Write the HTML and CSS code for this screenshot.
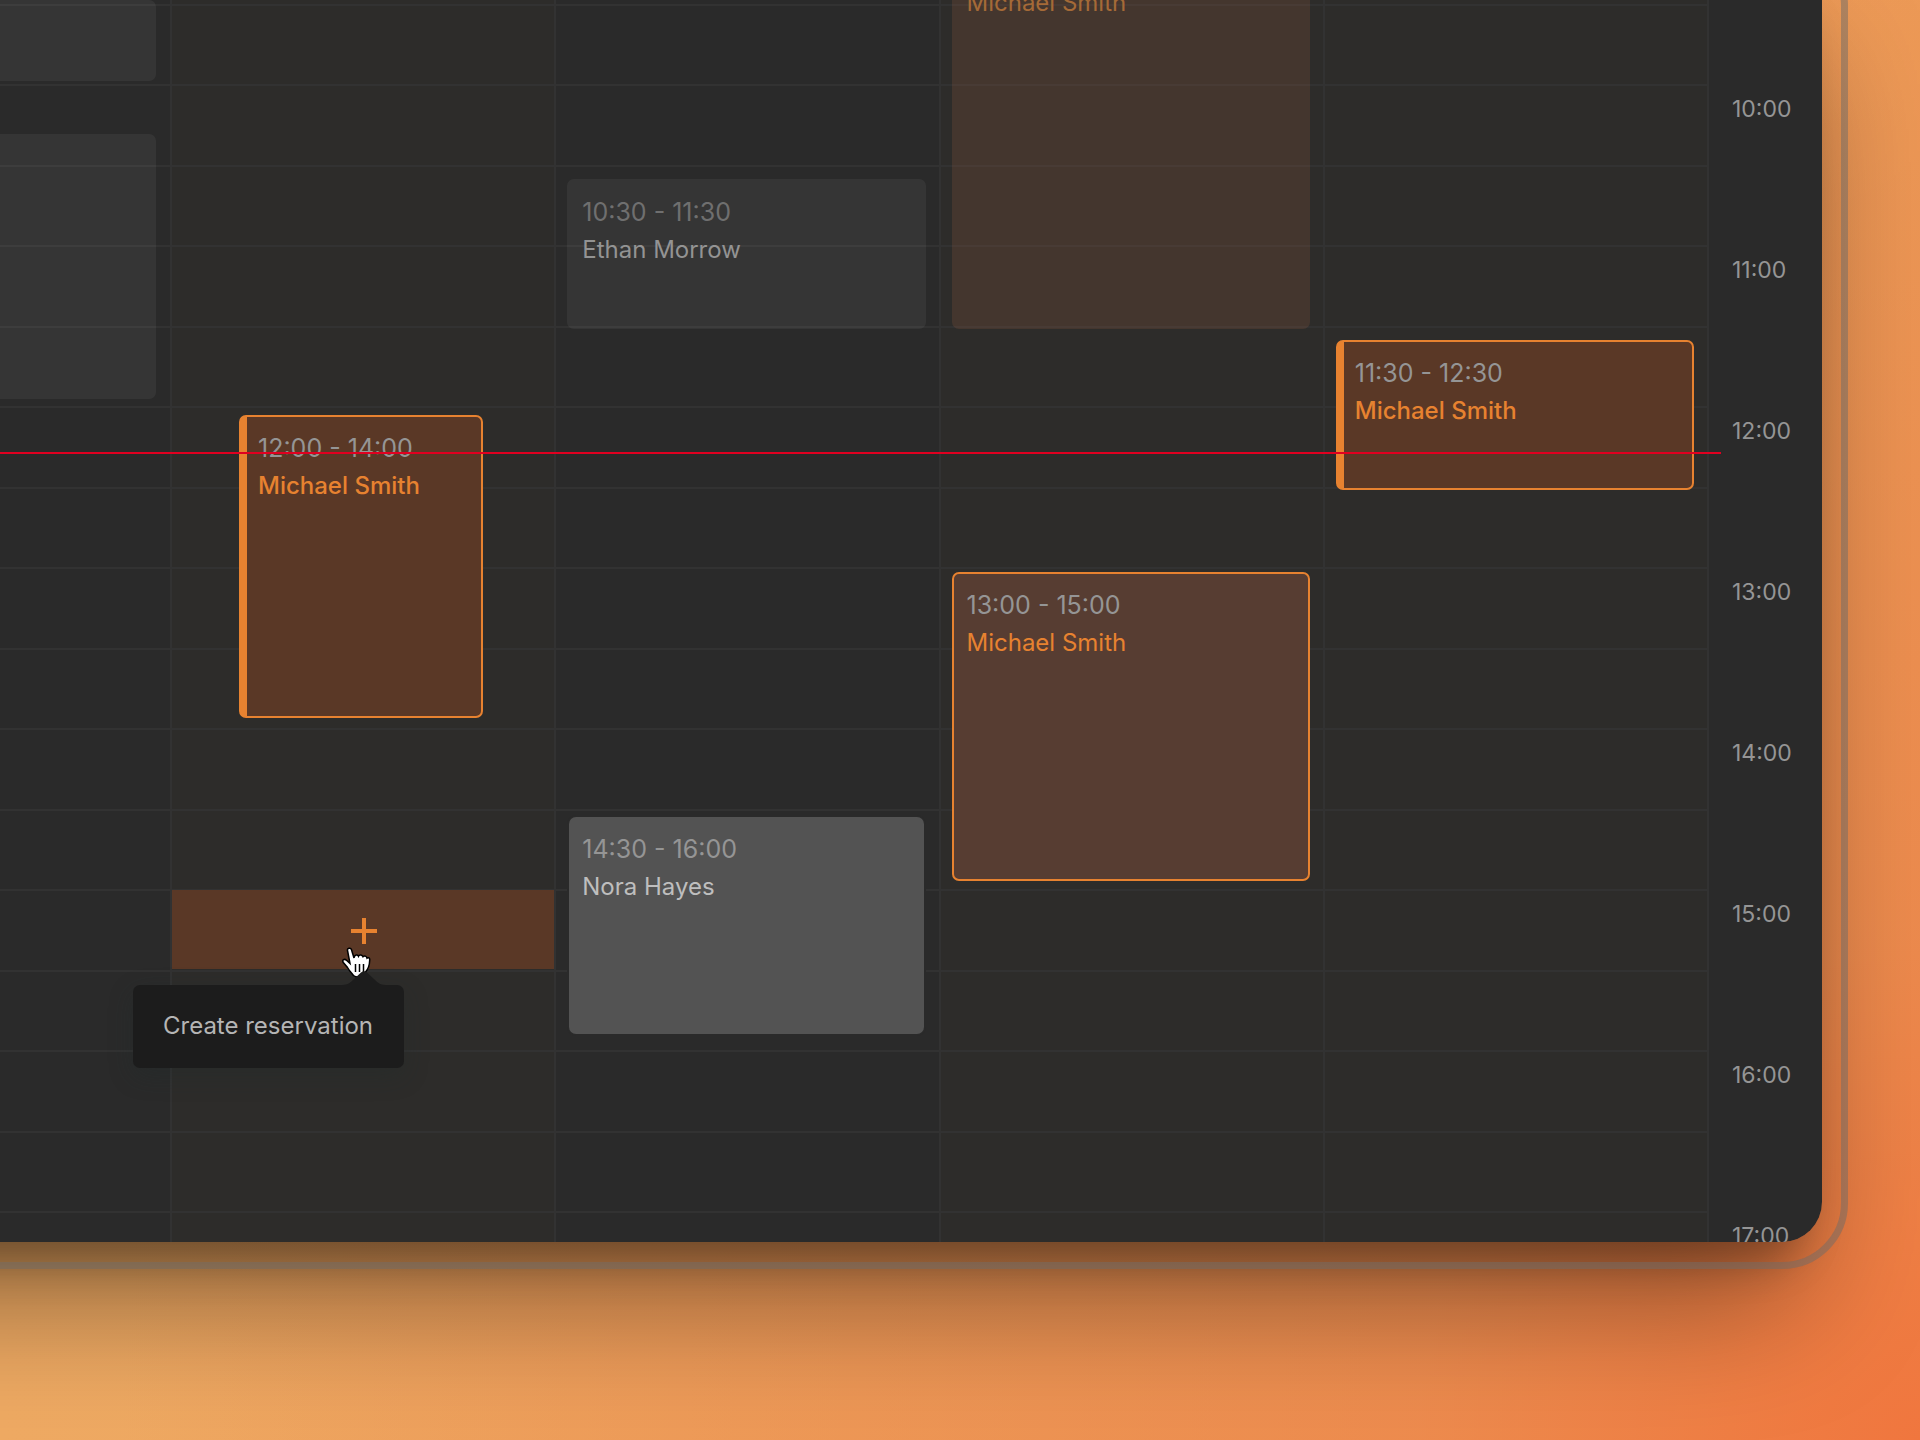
FILE: index.html
```html
<!DOCTYPE html>
<html lang="en">
<head>
<meta charset="utf-8">
<title>Reservations</title>
<link rel="stylesheet" href="styles.css">
</head>
<body>
<main class="window">
  <div class="calendar">
    <section class="day day-first">
      <article class="event past" style="--gap:0px;--size:81px"></article>
      <article class="event past" style="--gap:53px;--size:265px"></article>
    </section>
    <section class="day warm">
      <article class="event mine confirmed narrow" style="--gap:415px;--size:303px">
        <time>12:00 - 14:00</time>
        <strong>Michael Smith</strong>
      </article>
      <button class="slot" type="button" aria-label="Create reservation" aria-describedby="slot-tip">
        <svg class="plus" viewBox="0 0 28 28" aria-hidden="true"><path d="M14 1v26M1 14h26"/></svg>
      </button>
      <div class="tooltip" id="slot-tip" role="tooltip">
        <svg class="tip" viewBox="0 0 44 14" aria-hidden="true"><path d="M0 14C6 14 9 11 12 8L19 1.500Q22-1 25 1.500L32 8C35 11 38 14 44 14z"/></svg>
        Create reservation
      </div>
      <svg class="pointer" viewBox="0 0 30 33" aria-hidden="true">
        <path class="hand" d="M6.500 4.500C6 2 9.800 1.200 10.500 3.700L13 12C13.300 8.300 17 8.300 17.500 10.200C18.500 8.300 21.300 8.800 22 10.700C23.400 9.300 25.600 10.200 26 12.200C27.500 11 29 12 28.700 14.200C28.500 20.500 27.300 23 24.500 26L23 29.500Q16 32.500 12.500 29.500C11 27.500 8.500 25 6.500 21.500L2.300 16.500C.800 14 3.300 12.300 5.500 14.300L9 17.500z"/>
        <path class="folds" d="M14.500 18v8M18.500 18v8M22.500 18v8"/>
      </svg>
    </section>
    <section class="day">
      <article class="event past" style="--gap:179px;--size:150px">
        <time>10:30 - 11:30</time>
        <strong>Ethan Morrow</strong>
      </article>
      <article class="event busy" style="--gap:488px;--size:217px">
        <time>14:30 - 16:00</time>
        <strong>Nora Hayes</strong>
      </article>
    </section>
    <section class="day warm">
      <article class="event past mine-past" style="--gap:-68px;--size:397px">
        <time>9:00 - 11:30</time>
        <strong>Michael Smith</strong>
      </article>
      <article class="event mine pending" style="--gap:243px;--size:309px">
        <time>13:00 - 15:00</time>
        <strong>Michael Smith</strong>
      </article>
    </section>
    <section class="day warm">
      <article class="event mine confirmed" style="--gap:340px;--size:150px">
        <time>11:30 - 12:30</time>
        <strong>Michael Smith</strong>
      </article>
    </section>
    <ol class="hours">
      <li>10:00</li>
      <li>11:00</li>
      <li>12:00</li>
      <li>13:00</li>
      <li>14:00</li>
      <li>15:00</li>
      <li>16:00</li>
      <li>17:00</li>
    </ol>
    <div class="now"></div>
  </div>
</main>
</body>
</html>
```
FILE: styles.css
```css
:root {
  --accent: #e78230;
  --panel: #2a2a2a;
  --line: #323232;
}

* {
  box-sizing: border-box;
}

body {
  display: flex;
  height: 100vh;
  margin: 0;
  padding: 0 98px 198px 0;
  overflow: hidden;
  background:
    radial-gradient(circle at 100% 100%, #f0763e 0, rgba(238, 130, 72, 0.7) 500px, rgba(236, 150, 80, 0) 1800px),
    linear-gradient(90deg, #efaa63, #ec9f5a);
  color: #959595;
  font-family: Inter, "Liberation Sans", sans-serif;
  font-size: 24px;
  line-height: 38px;
}

.window {
  position: relative;
  display: flex;
  flex: 1;
  margin-left: -200px;
  border-bottom-right-radius: 40px;
  box-shadow:
    -20px 20px 40px rgba(0, 0, 0, 0.28),
    -20px 60px 130px rgba(0, 0, 0, 0.4);
}

.window::after {
  content: "";
  position: absolute;
  inset: -60px -26px -27px -60px;
  border: 7px solid rgba(112, 108, 104, 0.5);
  border-radius: 66px;
}

.calendar {
  position: relative;
  display: grid;
  flex: 1;
  grid-template-columns: 372px repeat(4, 1fr) 113px;
  overflow: hidden;
  border-bottom-right-radius: 40px;
  background: var(--panel);
}

.day {
  position: relative;
  display: flow-root;
  min-height: 0;
  border-right: 2px solid var(--line);
  background: repeating-linear-gradient(
    var(--line) 0 2px,
    transparent 2px 80px,
    var(--line) 80px 82px,
    transparent 82px 161px
  ) 0 -157px / 100% 1610px;
}

.warm {
  background-color: #2d2c2a;
}

.event {
  display: flex;
  flex-direction: column;
  height: var(--size);
  margin: var(--gap) 13px 0 11px;
  padding: 14px 15px;
  border-radius: 7px;
}

.event time {
  font-size: 25px;
}

.event strong {
  font-weight: 400;
}

.past {
  background: rgba(255, 255, 255, 0.055);
  color: #6f6f6f;
}

.past strong {
  color: #939393;
}

.day-first .event {
  margin-right: 14px;
  margin-left: 0;
}

.mine-past {
  background: rgba(150, 92, 62, 0.22);
}

.mine-past strong {
  color: #a56a37;
}

.mine {
  padding: 12px 13px;
  border: 2px solid var(--accent);
}

.mine strong {
  color: var(--accent);
}

.pending {
  background: #573d32;
}

.confirmed {
  padding-left: 11px;
  border-left-width: 8px;
  background: #5a3826;
}

.confirmed strong {
  font-weight: 500;
}

.narrow {
  margin-right: 71px;
  margin-left: 67px;
}

.busy {
  margin-right: 15px;
  margin-left: 13px;
  padding: 13px;
  background: #535353;
  box-shadow: 0 0 0 2px var(--panel);
}

.busy strong {
  color: #bebebe;
}

.slot {
  display: grid;
  place-items: center;
  width: 100%;
  height: 79px;
  margin-top: 172px;
  padding: 2px 0 0 2px;
  border: 0;
  background: #5a3826;
  cursor: pointer;
}

.plus {
  width: 28px;
  height: 28px;
  fill: none;
  stroke: var(--accent);
  stroke-width: 4;
}

.tooltip {
  position: absolute;
  top: 985px;
  left: -39px;
  z-index: 3;
  padding: 22px 31px 23px 30px;
  border-radius: 7px;
  background: #1c1c1c;
  box-shadow: 0 8px 24px rgba(30, 42, 42, 0.3);
  color: #b5b5b5;
  white-space: nowrap;
}

.tip {
  position: absolute;
  bottom: 100%;
  left: 209px;
  width: 44px;
  height: 14px;
  fill: #1c1c1c;
}

.pointer {
  position: absolute;
  top: 946px;
  left: 169px;
  z-index: 2;
  width: 30px;
  height: 33px;
}

.hand {
  fill: #fff;
  stroke: #000;
  stroke-width: 1.5;
}

.folds {
  fill: none;
  stroke: #000;
  stroke-width: 1.5;
}

.hours {
  margin: 0;
  padding: 90px 0 0 23px;
  min-height: 0;
  list-style: none;
  font-size: 23px;
}

.hours li {
  height: 161px;
}

.now {
  position: absolute;
  top: 452px;
  right: 101px;
  left: 0;
  height: 2px;
  background: #e00020;
}
```
